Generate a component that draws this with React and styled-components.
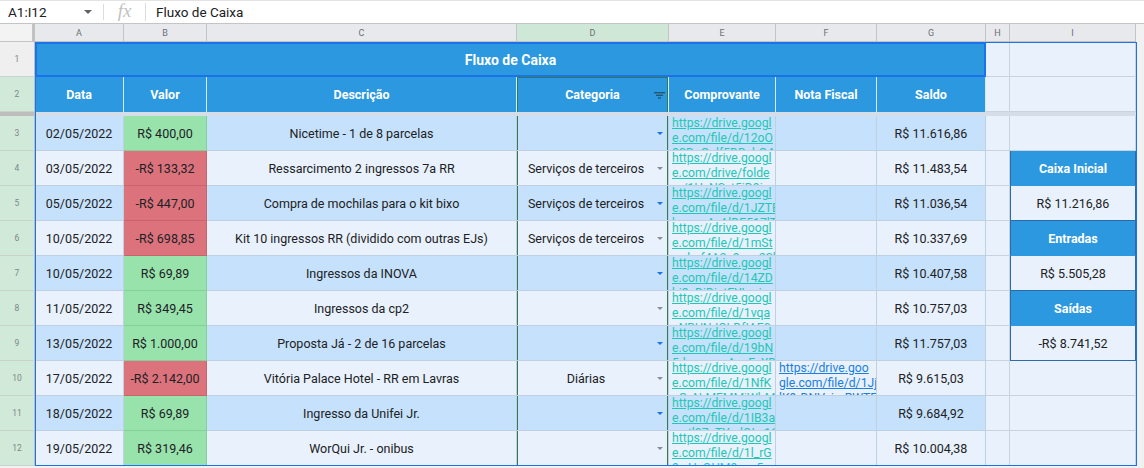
import React from "react";
import styled, { createGlobalStyle } from "styled-components";

const COLS = "35px 89px 83px 310px 152px 107px 101px 109px 24px 126px 8px";

const BLUE = "#2b98df";
const DARK_ROW = "#c6e1fb";
const LIGHT_ROW = "#e8f1fc";
const GREEN = "#98e2ac";
const RED = "#dc737c";
const GRID = "#bfd0e2";
const FILTER = "#357a4e";

const rows = [
  { n: 3, date: "02/05/2022", value: "R$ 400,00", pos: true, desc: "Nicetime - 1 de 8 parcelas", cat: "", link: ["https://drive.googl", "e.com/file/d/12oO", "8SDuGplf5DDzhG4"], saldo: "R$ 11.616,86" },
  { n: 4, date: "03/05/2022", value: "-R$ 133,32", desc: "Ressarcimento 2 ingressos 7a RR", cat: "Serviços de terceiros", link: ["https://drive.googl", "e.com/drive/folde", "rs/1HzNSzt5iD9i"], saldo: "R$ 11.483,54", panel: { head: "Caixa Inicial" } },
  { n: 5, date: "05/05/2022", value: "-R$ 447,00", desc: "Compra de mochilas para o kit bixo", cat: "Serviços de terceiros", link: ["https://drive.googl", "e.com/file/d/1JZTE", "hzcuwAyAlDE517lT"], saldo: "R$ 11.036,54", panel: { value: "R$ 11.216,86" } },
  { n: 6, date: "10/05/2022", value: "-R$ 698,85", desc: "Kit 10 ingressos RR (dividido com outras EJs)", cat: "Serviços de terceiros", link: ["https://drive.googl", "e.com/file/d/1mSt", "wzbcf4A2c9yeo2Sb"], saldo: "R$ 10.337,69", panel: { head: "Entradas" } },
  { n: 7, date: "10/05/2022", value: "R$ 69,89", pos: true, desc: "Ingressos da INOVA", cat: "", link: ["https://drive.googl", "e.com/file/d/14ZD", "bi3eDiDjstEYLmjx"], saldo: "R$ 10.407,58", panel: { value: "R$ 5.505,28" } },
  { n: 8, date: "11/05/2022", value: "R$ 349,45", pos: true, desc: "Ingressos da cp2", cat: "", link: ["https://drive.googl", "e.com/file/d/1vqa", "aNBUNJOLDfIAE0"], saldo: "R$ 10.757,03", panel: { head: "Saídas" } },
  { n: 9, date: "13/05/2022", value: "R$ 1.000,00", pos: true, desc: "Proposta Já - 2 de 16 parcelas", cat: "", link: ["https://drive.googl", "e.com/file/d/19bN", "5dzcavcmAceE_XD"], saldo: "R$ 11.757,03", panel: { value: "-R$ 8.741,52" } },
  { n: 10, date: "17/05/2022", value: "-R$ 2.142,00", desc: "Vitória Palace Hotel - RR em Lavras", cat: "Diárias", link: ["https://drive.googl", "e.com/file/d/1NfK", "nGsN-MFMMiWbM"], nota: ["https://drive.goo", "gle.com/file/d/1Jj", "lK9rDNVzjmRWTE"], saldo: "R$ 9.615,03" },
  { n: 11, date: "18/05/2022", value: "R$ 69,89", pos: true, desc: "Ingresso da Unifei Jr.", cat: "", link: ["https://drive.googl", "e.com/file/d/1IB3a", "wutl07cTYmlQLz16"], saldo: "R$ 9.684,92" },
  { n: 12, date: "19/05/2022", value: "R$ 319,46", pos: true, desc: "WorQui Jr. - onibus", cat: "", link: ["https://drive.googl", "e.com/file/d/1l_rG", "9wHzQHM9xaa5"], saldo: "R$ 10.004,38" },
];

const GlobalStyle = createGlobalStyle`
  html, body {
    margin: 0;
    padding: 0;
    background: #ffffff;
  }
  body {
    font-family: Roboto, "Noto Sans", Arial, sans-serif;
    color: #202124;
    overflow: hidden;
  }
`;

const Page = styled.div`
  width: 1144px;
  height: 468px;
  overflow: hidden;
  display: flex;
  flex-direction: column;
  background: #f1f1f1;
`;

const FormulaBar = styled.div`
  height: 24px;
  box-sizing: border-box;
  border-top: 1px solid #e3e3e3;
  border-bottom: 1px solid #c4c4c4;
  background: #fff;
  display: flex;
  align-items: center;
  font-size: 13.5px;
`;

const NameBox = styled.div`
  width: 104px;
  box-sizing: border-box;
  padding: 0 8px;
  display: flex;
  align-items: center;
  justify-content: space-between;
  border-right: 1px solid #dadce0;
  height: 16px;
`;

const Caret = styled.span`
  width: 0;
  height: 0;
  border-left: 4px solid transparent;
  border-right: 4px solid transparent;
  border-top: 4px solid #5f6368;
  margin-right: 3px;
`;

const Fx = styled.div`
  width: 42px;
  box-sizing: border-box;
  text-align: center;
  font-family: "Liberation Serif", serif;
  font-style: italic;
  font-size: 19px;
  color: #c2c2c2;
  border-right: 1px solid #dadce0;
  height: 18px;
  line-height: 16px;
`;

const FormulaText = styled.div`
  padding-left: 10px;
`;

const Row = styled.div`
  display: grid;
  grid-template-columns: ${COLS};
  height: ${(p) => p.$h || 35}px;
`;

const ColHead = styled.div`
  box-sizing: border-box;
  background: ${(p) => (p.$sel ? "#cfe7d6" : "#e8e9ec")};
  border-right: 1px solid #c4c4c4;
  border-bottom: 1px solid #c4c4c4;
  font-size: 9px;
  color: #6b6f74;
  display: flex;
  align-items: center;
  justify-content: center;
`;

const Corner = styled.div`
  box-sizing: border-box;
  background: #f3f3f3;
  border-right: 3px solid #c2c2c2;
  border-bottom: 1px solid #c4c4c4;
`;

const Body = styled.div`
  position: relative;
  display: flex;
  flex-direction: column;
`;

const RowHead = styled.div`
  box-sizing: border-box;
  background: ${(p) => (p.$sel ? "#d0e9d9" : "#efefef")};
  border-right: 1px solid #bdbdbd;
  border-bottom: 1px solid #c9d3cc;
  font-size: 8.5px;
  color: #80868b;
  display: flex;
  align-items: center;
  justify-content: center;
`;

const Cell = styled.div`
  box-sizing: border-box;
  background: ${(p) => p.$bg || LIGHT_ROW};
  border-right: 1px solid ${(p) => p.$line || GRID};
  border-bottom: 1px solid ${(p) => p.$line || GRID};
  font-size: 12.5px;
  display: flex;
  align-items: center;
  justify-content: center;
  white-space: nowrap;
  overflow: hidden;
  min-width: 0;
`;

const Title = styled.div`
  grid-column: span 7;
  background: ${BLUE};
  box-shadow: inset 0 0 0 2px #1a73e8;
  color: #fff;
  font-weight: 700;
  font-size: 14px;
  display: flex;
  align-items: center;
  justify-content: center;
`;

const Head = styled(Cell)`
  background: ${BLUE};
  color: #fff;
  font-weight: 700;
  font-size: 12.5px;
  border-right-color: #d6e9f8;
  border-bottom: none;
  position: relative;
  box-shadow: ${(p) => (p.$filter ? `inset 1px 1px 0 ${FILTER}, inset -1px 0 0 ${FILTER}` : "none")};
`;

const FilterIcon = styled.svg`
  position: absolute;
  right: 3px;
  top: 15px;
`;

const CatCell = styled(Cell)`
  justify-content: flex-start;
  box-shadow: inset 1px 0 0 ${FILTER}, inset -1px 0 0 ${FILTER};
`;

const CatText = styled.span`
  flex: 1;
  text-align: center;
  padding-left: 2px;
`;

const DropArrow = styled.span`
  width: 0;
  height: 0;
  margin: 0 5px 0 4px;
  border-left: 3px solid transparent;
  border-right: 3px solid transparent;
  border-top: 3px solid ${(p) => (p.$dark ? "#1a73e8" : "#8a8d91")};
`;

const LinkCell = styled(Cell)`
  display: block;
  padding: 0 3px;
  line-height: 15px;
  font-size: 12.2px;
`;

const Link = styled.a`
  display: block;
  color: ${(p) => p.$color};
  text-decoration: underline;
  text-decoration-color: ${(p) => p.$color};
  text-underline-offset: 1px;
`;

const FreezeCell = styled.div`
  background: ${(p) => (p.$dark ? "#bdbdbd" : "#d4dde8")};
`;

const PanelCell = styled(Cell)`
  background: ${(p) => (p.$head ? BLUE : LIGHT_ROW)};
  color: ${(p) => (p.$head ? "#fff" : "#202124")};
  font-weight: ${(p) => (p.$head ? 700 : 400)};
  border-right: 1px solid #2d6aa8;
  border-left: 1px solid #2d6aa8;
  border-bottom: 1px solid ${(p) => (p.$head ? BLUE : "#2d6aa8")};
`;

const Gutter = styled.div`
  background: #f1f1f1;
`;

const Selection = styled.div`
  position: absolute;
  left: 35px;
  top: 0;
  width: 1102px;
  height: 424px;
  box-sizing: border-box;
  border: 1px solid #1a73e8;
  pointer-events: none;
`;

function LinkLines({ lines, color }) {
  return (
    <Link $color={color} href="#">
      {lines.map((l, i) => (
        <span key={i}>
          {l}
          <br />
        </span>
      ))}
    </Link>
  );
}

export default function App() {
  const letters = ["A", "B", "C", "D", "E", "F", "G", "H", "I"];
  return (
    <Page>
      <GlobalStyle />
      <FormulaBar>
        <NameBox>
          <span>A1:I12</span>
          <Caret />
        </NameBox>
        <Fx>fx</Fx>
        <FormulaText>Fluxo de Caixa</FormulaText>
      </FormulaBar>

      <Row $h={18}>
        <Corner />
        {letters.map((l) => (
          <ColHead key={l} $sel={l === "D"}>
            {l}
          </ColHead>
        ))}
        <Gutter />
      </Row>

      <Body>
        <Row>
          <RowHead>1</RowHead>
          <Title>Fluxo de Caixa</Title>
          <Cell $line="#c9d3de" />
          <Cell $line="#c9d3de" />
          <Gutter />
        </Row>
        <Row>
          <RowHead $sel>2</RowHead>
          <Head>Data</Head>
          <Head>Valor</Head>
          <Head>Descrição</Head>
          <Head $filter>
            Categoria
            <FilterIcon width="11" height="7" viewBox="0 0 11 7">
              <rect x="0" y="0" width="11" height="1.4" fill="#27566e" />
              <rect x="2" y="2.6" width="7" height="1.4" fill="#27566e" />
              <rect x="4" y="5.2" width="3" height="1.4" fill="#27566e" />
            </FilterIcon>
          </Head>
          <Head>Comprovante</Head>
          <Head>Nota Fiscal</Head>
          <Head>Saldo</Head>
          <Cell $line="#c9d3de" />
          <Cell $line="#c9d3de" />
          <Gutter />
        </Row>
        <Row $h={4}>
          <FreezeCell $dark />
          {letters.map((l) => (
            <FreezeCell key={l} />
          ))}
          <Gutter />
        </Row>

        {rows.map((r, i) => {
          const dark = i % 2 === 0;
          const bg = dark ? DARK_ROW : LIGHT_ROW;
          return (
            <Row key={r.n}>
              <RowHead $sel>{r.n}</RowHead>
              <Cell $bg={bg}>{r.date}</Cell>
              <Cell $bg={r.pos ? GREEN : RED} $line={r.pos ? "#86cf9b" : "#c9646d"}>
                {r.value}
              </Cell>
              <Cell $bg={bg}>{r.desc}</Cell>
              <CatCell $bg={bg}>
                <CatText>{r.cat}</CatText>
                <DropArrow $dark={dark} />
              </CatCell>
              <LinkCell $bg={bg}>
                <LinkLines lines={r.link} color="#1fc7b6" />
              </LinkCell>
              {r.nota ? (
                <LinkCell $bg={bg}>
                  <LinkLines lines={r.nota} color="#1a7fe0" />
                </LinkCell>
              ) : (
                <Cell $bg={bg} />
              )}
              <Cell $bg={bg}>{r.saldo}</Cell>
              <Cell $line="#c9d3de" />
              {r.panel ? (
                <PanelCell $head={!!r.panel.head}>{r.panel.head || r.panel.value}</PanelCell>
              ) : (
                <Cell $line="#c9d3de" />
              )}
              <Gutter />
            </Row>
          );
        })}
        <Selection />
      </Body>
    </Page>
  );
}
